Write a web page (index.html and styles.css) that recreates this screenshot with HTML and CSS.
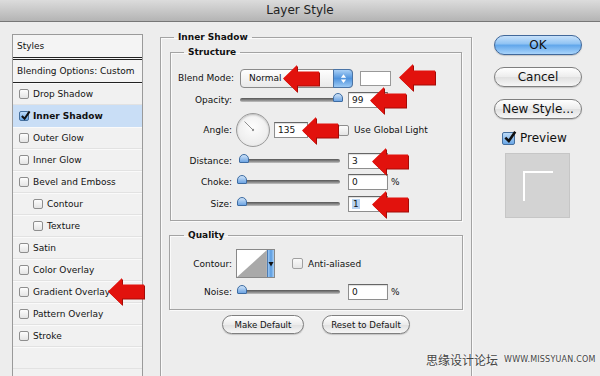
FILE: index.html
```html
<!DOCTYPE html>
<html lang="en">
<head>
  <meta charset="UTF-8">
  <title>Layer Style</title>
  <link rel="stylesheet" href="styles.css">
</head>
<body>

  <!-- Title bar -->
  <div class="titlebar">Layer Style</div>

  <div class="window">

    <!-- Left: styles list -->
    <div class="styles-list">
      <div class="list-head">Styles</div>
      <div class="list-blend">Blending Options: Custom</div>
      <div class="item"><span class="cb"></span>Drop Shadow</div>
      <div class="item active"><span class="cb on"><svg viewBox="0 0 12 12"><path d="M2 6.5 L5 9.5 L10.5 1.5" fill="none" stroke="#111" stroke-width="2.2"/></svg></span><b>Inner Shadow</b></div>
      <div class="item"><span class="cb"></span>Outer Glow</div>
      <div class="item"><span class="cb"></span>Inner Glow</div>
      <div class="item"><span class="cb"></span>Bevel and Emboss</div>
      <div class="item sub"><span class="cb"></span>Contour</div>
      <div class="item sub"><span class="cb"></span>Texture</div>
      <div class="item"><span class="cb"></span>Satin</div>
      <div class="item"><span class="cb"></span>Color Overlay</div>
      <div class="item"><span class="cb"></span>Gradient Overlay</div>
      <div class="item"><span class="cb"></span>Pattern Overlay</div>
      <div class="item"><span class="cb"></span>Stroke</div>
      <div class="item"></div>
    </div>

    <!-- Center: settings -->
    <fieldset class="panel">
      <legend>Inner Shadow</legend>

      <fieldset class="group structure">
        <legend>Structure</legend>

        <div class="row h20">
          <span class="lbl">Blend Mode:</span>
          <div class="select">Normal
            <span class="stepper"><svg viewBox="0 0 8 12"><path d="M4 1 L7 5 L1 5 Z M4 11 L7 7 L1 7 Z" fill="#fff"/></svg></span>
          </div>
          <div class="swatch"></div>
        </div>

        <div class="row h16 mt4">
          <span class="lbl">Opacity:</span>
          <div class="slider"><span class="knob" style="left: 93px"></span></div>
          <div class="field">99</div>
        </div>

        <div class="row h34 mt5">
          <span class="lbl">Angle:</span>
          <div class="dial"><svg viewBox="0 0 34 34"><line x1="17" y1="17" x2="8" y2="8" stroke="#888" stroke-width="1"/><circle cx="17" cy="17" r="1.2" fill="#888"/></svg></div>
          <div class="field angle">135</div>
          <span class="cb global"></span><span class="cb-text">Use Global Light</span>
        </div>

        <div class="row h16 mt6">
          <span class="lbl">Distance:</span>
          <div class="slider"><span class="knob" style="left: -1px"></span></div>
          <div class="field">3</div>
        </div>

        <div class="row h16 mt5">
          <span class="lbl">Choke:</span>
          <div class="slider"><span class="knob" style="left: -3px"></span></div>
          <div class="field">0</div>
          <span class="pct">%</span>
        </div>

        <div class="row h16 mt6">
          <span class="lbl">Size:</span>
          <div class="slider"><span class="knob" style="left: -3px"></span></div>
          <div class="field"><span class="sel">1</span></div>
        </div>
      </fieldset>

      <fieldset class="group quality">
        <legend>Quality</legend>

        <div class="row h29">
          <span class="lbl">Contour:</span>
          <div class="contour">
            <svg class="curve" viewBox="0 0 32 29"><path d="M0 29 L32 0 L32 29 Z" fill="#a9a9a9"/></svg>
            <span class="drop"><svg viewBox="0 0 6 8"><path d="M0.5 2 L5.5 2 L3 6.5 Z" fill="#111"/></svg></span>
          </div>
          <span class="cb anti"></span><span class="cb-text">Anti-aliased</span>
        </div>

        <div class="row h16 mt6">
          <span class="lbl">Noise:</span>
          <div class="slider"><span class="knob" style="left: -3px"></span></div>
          <div class="field">0</div>
          <span class="pct">%</span>
        </div>
      </fieldset>

      <div class="defaults">
        <button class="btn small make">Make Default</button>
        <button class="btn small reset">Reset to Default</button>
      </div>
    </fieldset>

    <!-- Right: dialog buttons -->
    <div class="side">
      <button class="btn ok">OK</button>
      <button class="btn">Cancel</button>
      <button class="btn">New Style...</button>
      <div class="preview-row">
        <span class="cb big on"><svg viewBox="0 0 12 12"><path d="M2 6.5 L5 9.5 L10.5 1.5" fill="none" stroke="#111" stroke-width="2.2"/></svg></span>
        <span>Preview</span>
      </div>
      <div class="preview-box"><span class="corner"></span></div>
    </div>
  </div>

  <!-- Red annotation arrows -->
  <svg class="arrow" style="left: 283px; top: 65px" viewBox="0 0 36 27"><path d="M0 13.5 L14 0 L14 6.5 L36 6.5 L36 20.5 L14 20.5 L14 27 Z"/></svg>
  <svg class="arrow" style="left: 399px; top: 64px" viewBox="0 0 36 27"><path d="M0 13.5 L14 0 L14 6.5 L36 6.5 L36 20.5 L14 20.5 L14 27 Z"/></svg>
  <svg class="arrow" style="left: 370px; top: 87px" viewBox="0 0 36 27"><path d="M0 13.5 L14 0 L14 6.5 L36 6.5 L36 20.5 L14 20.5 L14 27 Z"/></svg>
  <svg class="arrow" style="left: 302px; top: 117px" viewBox="0 0 36 27"><path d="M0 13.5 L14 0 L14 6.5 L36 6.5 L36 20.5 L14 20.5 L14 27 Z"/></svg>
  <svg class="arrow" style="left: 372px; top: 148px" viewBox="0 0 36 27"><path d="M0 13.5 L14 0 L14 6.5 L36 6.5 L36 20.5 L14 20.5 L14 27 Z"/></svg>
  <svg class="arrow" style="left: 372px; top: 191px" viewBox="0 0 36 27"><path d="M0 13.5 L14 0 L14 6.5 L36 6.5 L36 20.5 L14 20.5 L14 27 Z"/></svg>
  <svg class="arrow" style="left: 108px; top: 278px" viewBox="0 0 36 27"><path d="M0 13.5 L14 0 L14 6.5 L36 6.5 L36 20.5 L14 20.5 L14 27 Z"/></svg>

  <!-- Watermark -->
  <div class="watermark"><span class="wm-cn">思缘设计论坛</span><span class="wm-en">WWW.MISSYUAN.COM</span></div>

</body>
</html>
```

FILE: styles.css
```css
* { margin: 0; padding: 0; box-sizing: border-box; }
body {
  width: 600px; height: 376px; overflow: hidden; position: relative;
  background: #ededed; font-family: 'DejaVu Sans', sans-serif; font-size: 9px; color: #111;
}

/* Title bar */
.titlebar {
  height: 22px; line-height: 21px; text-align: center; font-size: 12px; color: #222;
  background: linear-gradient(#dcdcdc, #b4b4b4);
  border-bottom: 1px solid #777;
}

.window { display: flex; align-items: flex-start; padding: 12px 0 0 12px; }

/* Styles list */
.styles-list {
  width: 131px; height: 360px; flex-shrink: 0;
  border: 1px solid #9a9a9a; background: #f1f1f1;
}
.list-head { height: 25px; line-height: 22px; padding-left: 4px; border-bottom: 3px double #222; background: #f4f4f4; }
.list-blend { height: 23px; line-height: 22px; padding-left: 4px; border-bottom: 1px solid #222; background: #f4f4f4; }
.item {
  height: 22px; display: flex; align-items: center; padding-left: 6px;
  border-top: 1px solid #fafafa; border-bottom: 1px solid #e2e2e2;
}
.item.sub { padding-left: 20px; }
.item.active { background: #c9def6; border-color: #c9def6; }
.item b { font-weight: bold; }

/* Checkboxes */
.cb {
  width: 10px; height: 10px; margin-right: 4px; flex-shrink: 0; display: inline-block;
  border: 1px solid #8e8e8e; border-radius: 2px;
  background: linear-gradient(#fdfdfd, #e4e4e4);
}
.cb.on { background: linear-gradient(#bcdaf7, #6aa7e6); border-color: #456f9e; position: relative; }
.cb svg { position: absolute; left: 0; top: -2px; width: 11px; height: 11px; }
.cb.big { width: 13px; height: 13px; margin-right: 5px; }
.cb.big svg { width: 14px; height: 14px; top: -3px; left: 0; }

/* Fieldsets */
fieldset { border: 1px solid #a3a3a3; box-shadow: inset 1px 1px 0 #fafafa, 1px 1px 0 #fafafa; min-width: 0; }
legend { font-weight: bold; line-height: 13px; padding: 0 4px; }

.panel { width: 312px; height: 360px; margin: -3px 0 0 17px; padding: 2px 9px 0 9px; flex-shrink: 0; }
.panel > legend { margin-left: 4px; }
.group { padding: 9px 8px 8px 7px; }
.group > legend { margin-left: 6px; }
.quality { margin-top: 8px; padding-top: 7px; padding-bottom: 9px; margin-right: -1px; margin-left: -1px; padding-left: 8px; }

.row { display: flex; align-items: center; }
.h16 { height: 16px; } .h20 { height: 20px; } .h29 { height: 29px; } .h34 { height: 34px; }
.mt4 { margin-top: 4px; } .mt5 { margin-top: 5px; } .mt6 { margin-top: 6px; }
.lbl { width: 54px; margin-right: 8px; text-align: right; white-space: nowrap; }

/* Blend mode select */
.select {
  width: 113px; height: 19px; line-height: 17px; padding-left: 8px; position: relative;
  border: 1px solid #8a8a8a; border-radius: 4px;
  background: linear-gradient(#fefefe, #e9e9e9);
}
.stepper {
  position: absolute; right: -1px; top: -1px; width: 20px; height: 19px;
  border: 1px solid #4a74a6; border-radius: 0 4px 4px 0;
  background: linear-gradient(#a8cff6, #4f93dd 50%, #9ccaf5);
  display: flex; align-items: center; justify-content: center;
}
.stepper svg { width: 7px; height: 11px; }
.swatch { width: 31px; height: 15px; margin-left: 7px; background: #fff; border: 1px solid #999; }

/* Slider */
.slider {
  width: 100px; height: 4px; position: relative; border-radius: 2px;
  background: linear-gradient(#555, #8f8f8f 60%, #c4c4c4);
}
.knob {
  position: absolute; top: -5px; width: 10px; height: 9px;
  background: linear-gradient(#cfe3f8, #6ea5e3);
  border: 1px solid #3d6ca3; border-radius: 5px 5px 1px 1px;
}

/* Number fields */
.field {
  width: 40px; height: 16px; margin-left: 8px; padding-left: 3px; line-height: 14px;
  background: #fff; border: 1px solid #8e8e8e; border-top-color: #666;
  box-shadow: inset 0 1px 1px #ddd;
}
.field.angle { width: 34px; margin-left: 4px; }
.sel { background: #b7d3f1; padding: 0 1px; }
.pct { margin-left: 3px; }

.dial {
  width: 34px; height: 34px; margin-left: -4px; border-radius: 50%;
  border: 1px solid #9a9a9a; background: radial-gradient(circle at 50% 40%, #fdfdfd, #e6e6e6);
  box-shadow: inset 0 1px 2px #bbb;
}
.dial svg { width: 32px; height: 32px; display: block; }
.cb.global { margin-left: 30px; width: 11px; height: 11px; }
.cb.anti { margin-left: 17px; width: 11px; height: 11px; opacity: 0.8; }
.cb-text { white-space: nowrap; margin-left: 1px; }

/* Contour picker */
.contour {
  width: 39px; height: 29px; margin-left: -4px; display: flex; position: relative;
  border: 1px solid #888; background: #fff;
}
.curve { width: 31px; height: 27px; display: block; }
.drop {
  width: 7px; height: 27px; display: flex; align-items: center; justify-content: center;
  background: linear-gradient(90deg, #9cc7f2, #5b9ce0, #a9d0f6); border-left: 1px solid #4d7cb3;
}
.drop svg { width: 6px; height: 8px; }

/* Buttons */
.defaults { display: flex; justify-content: center; gap: 18px; margin-top: 5px; }
.btn {
  display: block; width: 88px; height: 20px; border-radius: 10px; font-family: inherit; font-size: 12px; color: #111;
  border: 1px solid #7f7f7f; background: linear-gradient(#ffffff, #ececec 50%, #e0e0e0 51%, #f6f6f6);
  box-shadow: 0 1px 1px #c4c4c4;
}
.btn.small { height: 19px; font-size: 8.6px; padding: 0; }
.btn.make { width: 82px; }
.btn.reset { width: 88px; }
.btn.ok {
  border-color: #41689a;
  background: linear-gradient(#c7e1fa, #8ec2f3 45%, #5fa5ea 50%, #a9d4fb);
}
.side { width: 88px; margin: 1px 0 0 22px; flex-shrink: 0; }
.side .btn + .btn { margin-top: 12px; }
.preview-row { display: flex; align-items: center; margin: 12px 0 0 8px; font-size: 12px; height: 14px; }
.preview-box {
  width: 65px; height: 65px; margin: 8px 0 0 11px; position: relative;
  background: #d3d3d3; border: 1px solid #c6c6c6;
}
.corner {
  position: absolute; left: 17px; top: 17px; width: 30px; height: 30px;
  border-left: 2px solid #fff; border-top: 2px solid #fff;
}

/* Annotation arrows */
.arrow { position: absolute; width: 36px; height: 27px; fill: #e2120d; filter: drop-shadow(1px 1px 0 #a40a06); }

/* Watermark */
.watermark { position: absolute; left: 426px; top: 351px; display: flex; align-items: center; color: #444; text-shadow: 0 0 2px #fff; }
.wm-cn { font-family: 'Noto Sans CJK SC', sans-serif; font-size: 12px; }
.wm-en { font-family: 'DejaVu Sans', sans-serif; font-size: 8px; margin-left: 6px; letter-spacing: 0.2px; }
```
